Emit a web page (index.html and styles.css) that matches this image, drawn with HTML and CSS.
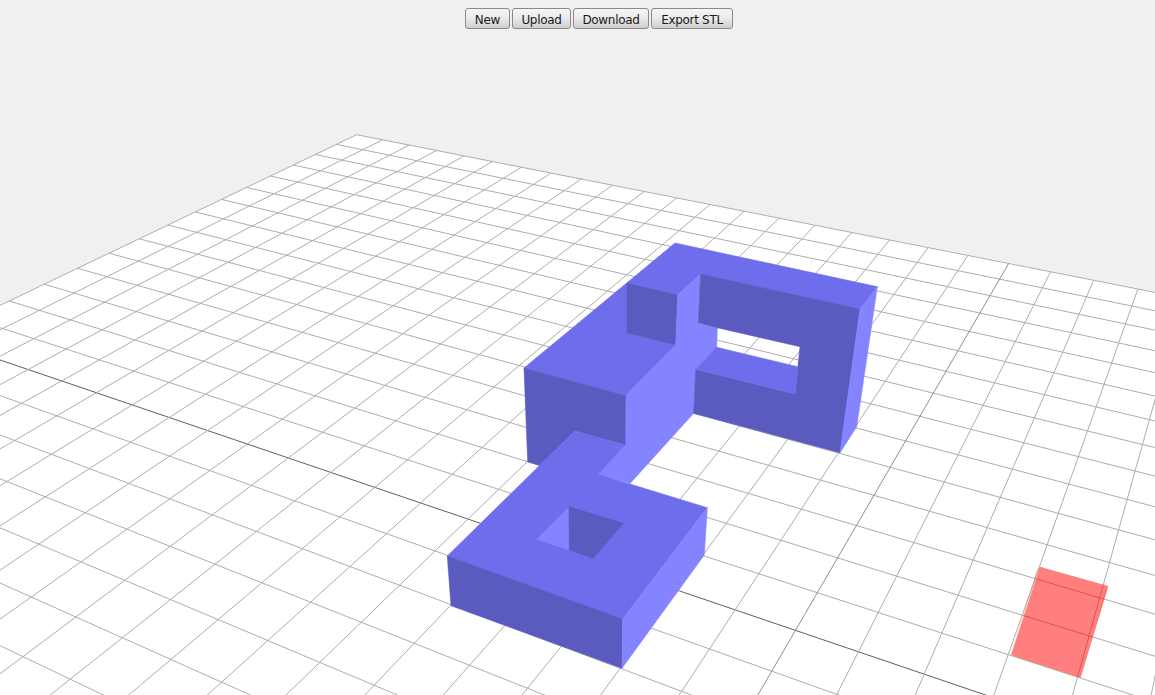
FILE: index.html
```html
<!DOCTYPE html>
<html lang="en">
<head>
<meta charset="utf-8">
<title>Voxel editor</title>
<link rel="stylesheet" href="styles.css">
</head>
<body>
<main class="viewport">
  <svg class="scene" viewBox="0 0 1155 695" xmlns="http://www.w3.org/2000/svg" aria-hidden="true">
    <polygon class="plane" points="356.7,134.7 1300,320 1300,800 -100,800 -100,353"/>
    <g id="grid"></g>
    <polygon class="face face-top" points="675,243 877.3,286.7 860,309 700.7,274 677.7,295 627,283 627,333 675.7,345 625.5,395.7 524,368"/>
    <polygon class="face face-dark" points="627,283 677.7,295 675.7,345 627,333"/>
    <polygon class="face face-light" points="677.7,295 700.7,274 698.3,322.7 717.3,327.7 716.7,347.3 695.7,369.3 693.7,413.3 630,483.3 598.3,474.3 625,445 625.5,395.7 675.7,345"/>
    <polygon class="face face-dark" points="524,368 625.5,395.7 625,445 574.7,431 540,465.5 527.7,461.7"/>
    <polygon class="face face-dark" points="700.7,274 860,309 840,452.7 693.7,413.3 695.7,369.3 795,394 800,346.7 717.3,327.7 698.3,322.7"/>
    <polygon class="face face-top" points="716.7,347.3 797.7,366.7 795,394 695.7,369.3"/>
    <polygon class="face face-light" points="877.3,286.7 860,309 840,452.7 856.7,426.7"/>
    <polygon class="face face-top" points="574.7,431 625,445 598.3,474.3 707.3,507.7 622.7,619 447.3,556"/>
    <polygon class="face face-light" points="569,506.7 569.3,550 536.7,539.3"/>
    <polygon class="face face-dark" points="569,506.7 623.3,523.3 593.3,558.3 569.3,550"/>
    <polygon class="face face-dark" points="447.3,556 622.7,619 622,668.3 451,605.7"/>
    <polygon class="face face-light" points="707.3,507.7 622.7,619 622,668.3 704.3,555"/>
    <polygon class="cursor" points="1040,566.7 1108.3,586 1080.7,677.7 1011,655"/>
    <polygon class="cursor-edge" points="1040,566.7 1036.5,570 1011,655"/>
    <polygon class="cursor-edge" points="1108.3,586 1105,590 1092,640"/>
  </svg>
  <nav class="toolbar">
    <button class="btn btn-new" type="button">New</button>
    <button class="btn btn-upload" type="button">Upload</button>
    <button class="btn btn-download" type="button">Download</button>
    <button class="btn btn-export" type="button">Export STL</button>
  </nav>
</main>
<script src="script.js"></script>
</body>
</html>
```
FILE: styles.css
```css
html, body {
  margin: 0;
  height: 100%;
  overflow: hidden;
}
body {
  background: #f0f0f0;
}
.viewport {
  position: relative;
  width: 100%;
  height: 100%;
}
.scene {
  position: absolute;
  inset: 0;
  width: 1155px;
  height: 695px;
  display: block;
}
.plane { fill: #fff; }
.grid-line { stroke: #adadad; stroke-width: 1; fill: none; }
.grid-line-mid { stroke: #909090; }
.grid-line-axis { stroke: #606060; }
.face { stroke-width: 0.6; stroke-linejoin: round; }
.face-top { fill: #6e6eed; stroke: #6e6eed; }
.face-dark { fill: #5a5abf; stroke: #5a5abf; }
.face-light { fill: #8484ff; stroke: #8484ff; }
.cursor { fill: rgba(255, 0, 0, 0.5); }
.cursor-edge { fill: rgba(255, 0, 0, 0.15); }
.toolbar {
  position: relative;
  display: flex;
  justify-content: center;
  gap: 2px;
  padding: 8px 0 0 43px;
}
.btn {
  height: 21px;
  padding: 3px 0 0;
  margin: 0;
  border: 1px solid #8a8a8a;
  border-radius: 3px;
  background: linear-gradient(#f6f6f6 0%, #ebebeb 45%, #cfcfcf 100%);
  color: #1a1a1a;
  font: 12px/15px "DejaVu Sans", sans-serif;
  letter-spacing: -0.3px;
}
.btn-new { width: 45px; }
.btn-upload { width: 59px; }
.btn-download { width: 76px; }
.btn-export { width: 82px; }
```
FILE: script.js
```js
// Projects the floor grid (u, v cell coordinates) onto the screen.
var NS = "http://www.w3.org/2000/svg";
var group = document.getElementById("grid");
var A = -0.010568;
var B = -0.019735;

function project(u, v) {
  var w = 1 + A * u + B * v;
  return [
    (356.7 + 21.94 * u - 26.91 * v) / w,
    (134.7 + 3.654 * u + 6.85 * v) / w
  ];
}

function addLine(a, b, cls) {
  var l = document.createElementNS(NS, "line");
  l.setAttribute("x1", a[0].toFixed(2));
  l.setAttribute("y1", a[1].toFixed(2));
  l.setAttribute("x2", b[0].toFixed(2));
  l.setAttribute("y2", b[1].toFixed(2));
  l.setAttribute("class", cls);
  group.appendChild(l);
}

for (var v = 0; v <= 42; v++) {
  var uMax = (0.9 + B * v) / -A;
  addLine(project(0, v), project(uMax, v), "grid-line" + (v === 15 ? " grid-line-axis" : ""));
}
for (var u = 0; u <= 80; u++) {
  var vMax = (0.9 + A * u) / -B;
  addLine(project(u, 0), project(u, vMax), "grid-line" + (u === 20 ? " grid-line-mid" : ""));
}
```
